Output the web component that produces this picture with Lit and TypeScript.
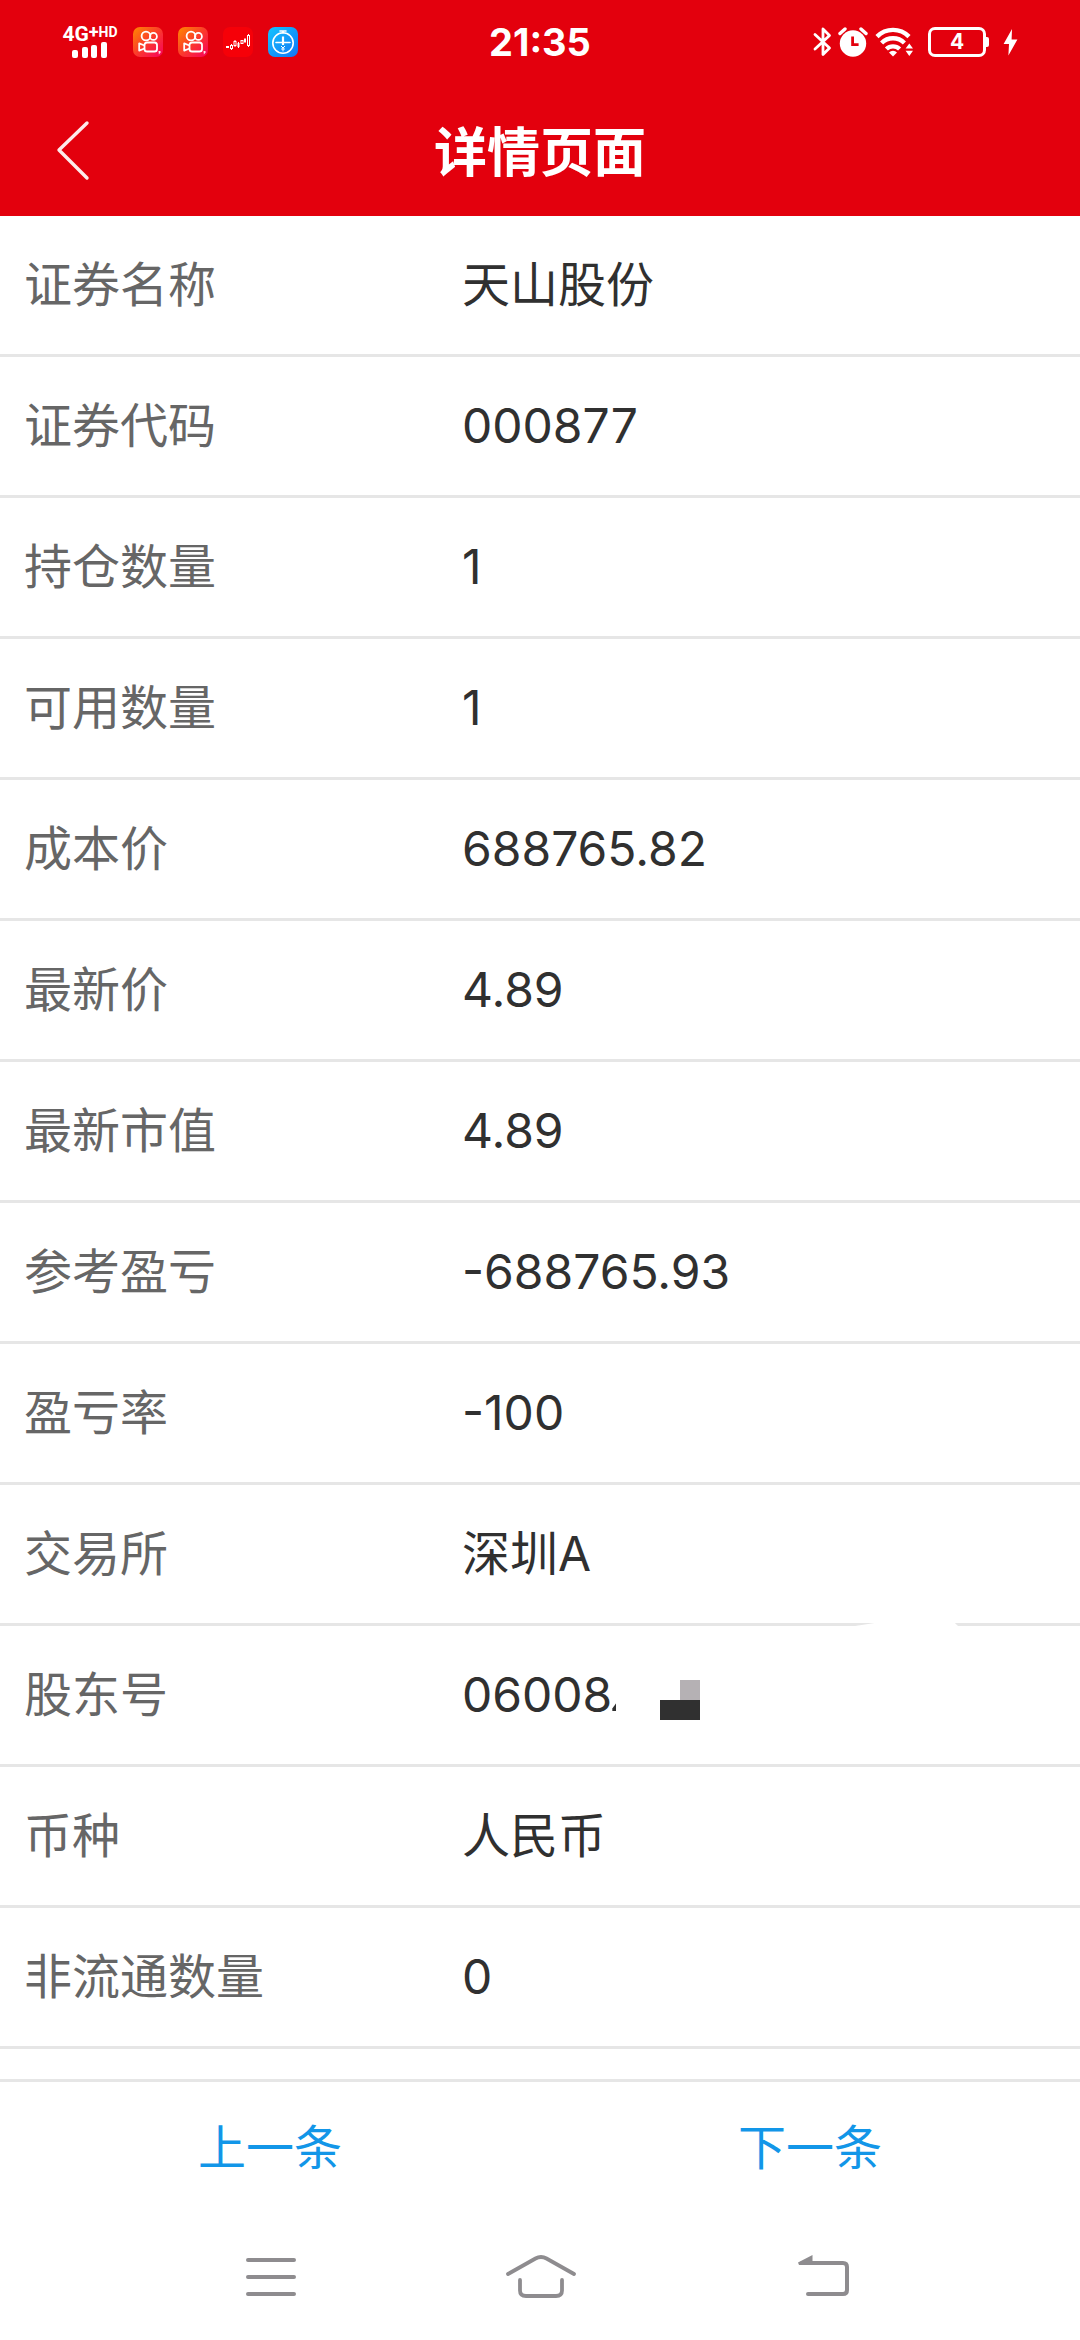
import { LitElement, html, css, svg } from "lit";
import { customElement, property } from "lit/decorators.js";

interface Field {
  label: string;
  value: string;
  masked?: boolean;
}

const FIELDS: Field[] = [
  { label: "证券名称", value: "天山股份" },
  { label: "证券代码", value: "000877" },
  { label: "持仓数量", value: "1" },
  { label: "可用数量", value: "1" },
  { label: "成本价", value: "688765.82" },
  { label: "最新价", value: "4.89" },
  { label: "最新市值", value: "4.89" },
  { label: "参考盈亏", value: "-688765.93" },
  { label: "盈亏率", value: "-100" },
  { label: "交易所", value: "深圳A" },
  { label: "股东号", value: "06008", masked: true },
  { label: "币种", value: "人民币" },
  { label: "非流通数量", value: "0" },
];

const cameraGlyph = svg`
  <g fill="none" stroke="#fff" stroke-width="1.8">
    <circle cx="13" cy="9" r="4.4" />
    <circle cx="20.4" cy="9.4" r="3.5" />
    <rect x="11.5" y="15.5" width="12.5" height="9" rx="2.6" />
    <path d="M11.5 18.5 L6.2 16.4 V23.6 L11.5 21.5" stroke-linejoin="round" />
  </g>
  <path d="M25.5 24 h2 v1.6 l-1.6 2 z" fill="#fff" opacity=".85" />`;

@customElement("status-bar")
export class StatusBar extends LitElement {
  static styles = css`
    :host {
      display: grid;
      grid-template-columns: 1fr auto 1fr;
      align-items: center;
      height: 84px;
      padding: 0 62px;
      box-sizing: border-box;
      color: #fff;
      font-family: Inter, "Noto Sans CJK SC", sans-serif;
    }
    svg {
      display: block;
      flex: none;
    }
    .left {
      display: flex;
      align-items: center;
      gap: 15px;
    }
    .network {
      display: flex;
      flex-direction: column;
      align-items: center;
      width: 56px;
      height: 32px;
      font-family: Roboto, sans-serif;
      font-weight: 700;
    }
    .kind {
      display: flex;
      align-items: flex-start;
      font-size: 21px;
      line-height: 16px;
    }
    .plus {
      font-size: 18px;
      line-height: 12px;
    }
    .hd {
      font-size: 14px;
      line-height: 12px;
    }
    .time {
      font-size: 38px;
      line-height: 48px;
      font-weight: 700;
    }
    .right {
      display: flex;
      align-items: center;
      justify-content: flex-end;
      gap: 6px;
    }
    .battery {
      display: flex;
      align-items: center;
      margin-left: 8px;
    }
    .cell {
      width: 58px;
      height: 30px;
      box-sizing: border-box;
      border: 3px solid #fff;
      border-radius: 7px;
      font-size: 21px;
      line-height: 24px;
      font-weight: 700;
      text-align: center;
    }
    .tip {
      width: 3px;
      height: 10px;
      border-radius: 0 2px 2px 0;
      background: #fff;
    }
    .bolt {
      margin-left: 8px;
    }
  `;

  render() {
    return html`
      <div class="left">
        <div class="network">
          <div class="kind">4G<span class="plus">+</span><span class="hd">HD</span></div>
          <svg width="36" height="16" viewBox="0 0 36 16" fill="#fff">
            <rect x="0" y="8" width="6" height="8" rx="2" />
            <rect x="10" y="5" width="6" height="11" rx="2" />
            <rect x="19" y="3" width="6" height="13" rx="2" />
            <rect x="29" y="0" width="6" height="16" rx="2" />
          </svg>
        </div>
        ${[0, 1].map(
          () => html`<svg width="30" height="30" viewBox="0 0 30 30">
            <defs>
              <linearGradient id="warm" x1="0" y1="0" x2="1" y2="1">
                <stop offset="0" stop-color="#ff8a00" />
                <stop offset=".5" stop-color="#fb3a2c" />
                <stop offset="1" stop-color="#f8005c" />
              </linearGradient>
            </defs>
            <rect width="30" height="30" rx="7" fill="url(#warm)" />
            ${cameraGlyph}
          </svg>`,
        )}
        <svg width="30" height="30" viewBox="0 0 30 30">
          <rect width="30" height="30" rx="7" fill="#f60008" />
          <g fill="none" stroke="#fff" stroke-width="1">
            <rect x="7.500" y="18.500" width="2" height="3" />
            <rect x="11" y="14.500" width="2" height="4" />
            <rect x="18" y="13.500" width="2" height="3" />
            <rect x="24.500" y="8.500" width="2" height="10" />
            <path d="M8.500 17 v1.500 M8.500 21.500 v1.500 M12 13 v1.500 M12 18.500 v1.500 M15.500 15 v6 M22 11 v5 M25.500 7 v1.500 M25.500 18.500 v1.500" />
          </g>
          <g fill="#fff">
            <rect x="3" y="19" width="3" height="2" />
            <rect x="14.500" y="16" width="2" height="4" />
            <rect x="21" y="12" width="2" height="3" />
          </g>
        </svg>
        <svg width="30" height="30" viewBox="0 0 30 30">
          <defs>
            <linearGradient id="cool" x1="0" y1="0" x2="1" y2="1">
              <stop offset="0" stop-color="#14c4ff" />
              <stop offset="1" stop-color="#1374f5" />
            </linearGradient>
          </defs>
          <rect width="30" height="30" rx="7" fill="url(#cool)" />
          <g fill="none" stroke="#fff" stroke-width="1.6">
            <circle cx="15" cy="16" r="10.2" />
            <path d="M12 4 H18 M15 4 V6 M8 15.5 H22" stroke-linecap="round" />
            <path d="M15 9.5 V18" stroke-width="2.2" />
            <path d="M13 19 L15 21 L17 19 M15 21 V24.4 M13.2 22 H16.8" stroke-width="1" />
          </g>
        </svg>
      </div>
      <div class="time">21:35</div>
      <div class="right">
        <svg width="19" height="30" viewBox="0 0 19 30" fill="none" stroke="#fff" stroke-width="2.8" stroke-linejoin="round" stroke-linecap="round">
          <path d="M2 7.500 L16.500 21 L10 27.500 V2 L16.500 8.500 L2 22" />
        </svg>
        <svg width="30" height="30" viewBox="0 0 30 30" fill="#fff">
          <circle cx="15" cy="16.5" r="13.2" />
          <path d="M2 6.5 L7 2 M23 2 L28 6.5" stroke="#fff" stroke-width="3.4" stroke-linecap="round" />
          <path d="M14.6 9.5 V17.6 H20.6" fill="none" stroke="#e3000d" stroke-width="2.8" />
        </svg>
        <svg width="40" height="30" viewBox="0 0 40 30" fill="none" stroke="#fff" stroke-width="4.4">
          <path d="M3 9.6 A22.5 22.5 0 0 1 35 9.6" />
          <path d="M7.6 16 A16 16 0 0 1 30.4 16" />
          <path d="M12.4 22 A9.6 9.6 0 0 1 25.6 22" />
          <path d="M15 25.400 A5.6 5.6 0 0 1 23 25.400 L19 29.6 Z" fill="#fff" stroke="none" />
          <path d="M31.6 21.6 L35.3 16.4 L39 21.6 Z M31.6 23.8 L35.3 29 L39 23.8 Z" fill="#fff" stroke="none" />
        </svg>
        <div class="battery">
          <div class="cell">4</div>
          <div class="tip"></div>
        </div>
        <svg class="bolt" width="15" height="30" viewBox="0 0 15 30" fill="#fff">
          <path d="M9 2 L0.6 17 H6 L5.4 28.4 L14.4 12.6 H8.6 Z" />
        </svg>
      </div>
    `;
  }
}

@customElement("detail-row")
export class DetailRow extends LitElement {
  @property({ attribute: false }) field!: Field;

  static styles = css`
    :host {
      display: block;
    }
    .row {
      position: relative;
      display: grid;
      grid-template-columns: 438px 1fr;
      align-items: center;
      min-height: 138px;
      margin: 0;
      padding: 0 24px;
      border-bottom: 3px solid #e6e6e6;
      font-size: 48px;
      line-height: 72px;
    }
    .label {
      color: #666;
    }
    .value {
      display: flex;
      align-items: center;
      margin: 0;
      color: #303030;
      font-feature-settings: "case";
    }
    .sliver {
      width: 4px;
      height: 8px;
      margin-top: 24px;
      background: #303030;
      clip-path: polygon(100% 0, 100% 100%, 0 100%, 0 70%);
    }
    .mosaic {
      display: grid;
      grid-template: 20px 20px / 20px 20px;
      margin: 10px 0 0 44px;
    }
    .light {
      grid-area: 1 / 2;
      background: #b5b1b4;
    }
    .dark {
      grid-area: 2 / 1 / 3 / 3;
      background: #303030;
    }
    .smear {
      position: absolute;
      top: -3px;
      left: 855px;
      width: 103px;
      height: 3px;
      background: #fff;
      clip-path: polygon(19% 0, 97% 0, 100% 100%, 0 100%);
    }
  `;

  render() {
    const { label, value, masked } = this.field;
    return html`
      <dl class="row">
        <dt class="label">${label}</dt>
        <dd class="value">
          <span>${value}</span>
          ${masked
            ? html`<i class="sliver"></i>
                <span class="mosaic"><i class="light"></i><i class="dark"></i></span>
                <span class="smear"></span>`
            : ""}
        </dd>
      </dl>
    `;
  }
}

@customElement("app-root")
export class AppRoot extends LitElement {
  static styles = css`
    :host {
      display: flex;
      flex-direction: column;
      min-height: 100vh;
      background: #fff;
      font-family: Inter, "Noto Sans CJK SC", sans-serif;
    }
    button {
      padding: 0;
      border: 0;
      background: none;
      font: inherit;
      color: inherit;
    }
    svg {
      display: block;
    }
    .header {
      background: #e3000d;
      color: #fff;
    }
    .bar {
      display: grid;
      grid-template-columns: 144px 1fr 144px;
      align-items: center;
      height: 132px;
    }
    .back {
      display: grid;
      place-items: center;
      height: 132px;
    }
    .title {
      margin: 0;
      padding-top: 6px;
      font-size: 53px;
      line-height: 72px;
      font-weight: 700;
      text-align: center;
    }
    .list {
      flex: 1;
    }
    .pager {
      display: grid;
      grid-template-columns: 1fr 1fr;
      height: 132px;
      border-top: 3px solid #e6e6e6;
      color: #1296e8;
      font-size: 48px;
      line-height: 72px;
    }
    .system {
      display: grid;
      grid-template-columns: repeat(3, 1fr);
      height: 126px;
      padding: 0 12.5%;
    }
    .key {
      display: grid;
      place-items: center;
    }
  `;

  render() {
    return html`
      <header class="header">
        <status-bar></status-bar>
        <div class="bar">
          <button class="back" aria-label="返回">
            <svg width="40" height="64" viewBox="0 0 40 64" fill="none" stroke="#fff" stroke-opacity=".92" stroke-width="3.4" stroke-linecap="round" stroke-linejoin="round">
              <path d="M35 5 L7 32 L35 60" />
            </svg>
          </button>
          <h1 class="title">详情页面</h1>
        </div>
      </header>
      <main class="list">
        ${FIELDS.map((field) => html`<detail-row .field=${field}></detail-row>`)}
      </main>
      <footer>
        <div class="pager">
          <button>上一条</button>
          <button>下一条</button>
        </div>
        <nav class="system">
          <button class="key" aria-label="菜单">
            <svg width="96" height="60" viewBox="0 0 96 60" fill="none" stroke="#8e8c8f" stroke-width="4" stroke-linecap="round">
              <path d="M26 13 H72 M26 30 H72 M26 47 H72" />
            </svg>
          </button>
          <button class="key" aria-label="主页">
            <svg width="96" height="60" viewBox="0 0 96 60" fill="none" stroke="#8e8c8f" stroke-width="3.8" stroke-linecap="round">
              <path d="M16 27 L43.5 11.5 Q49 8.5 54.500 11.5 L82 27" />
              <path d="M28 33 V43.500 Q28 49 34 49 H64 Q70 49 70 43.500 V33" />
            </svg>
          </button>
          <button class="key" aria-label="后退">
            <svg width="96" height="60" viewBox="0 0 96 60" fill="none" stroke="#8e8c8f" stroke-width="4" stroke-linecap="round">
              <path d="M40 16 H81 Q85 16 85 20 V43 Q85 47 81 47 H46" />
              <path d="M37 18 L36 15.500 L50.500 8 V18 Z" fill="#8e8c8f" stroke="none" />
            </svg>
          </button>
        </nav>
      </footer>
    `;
  }
}
